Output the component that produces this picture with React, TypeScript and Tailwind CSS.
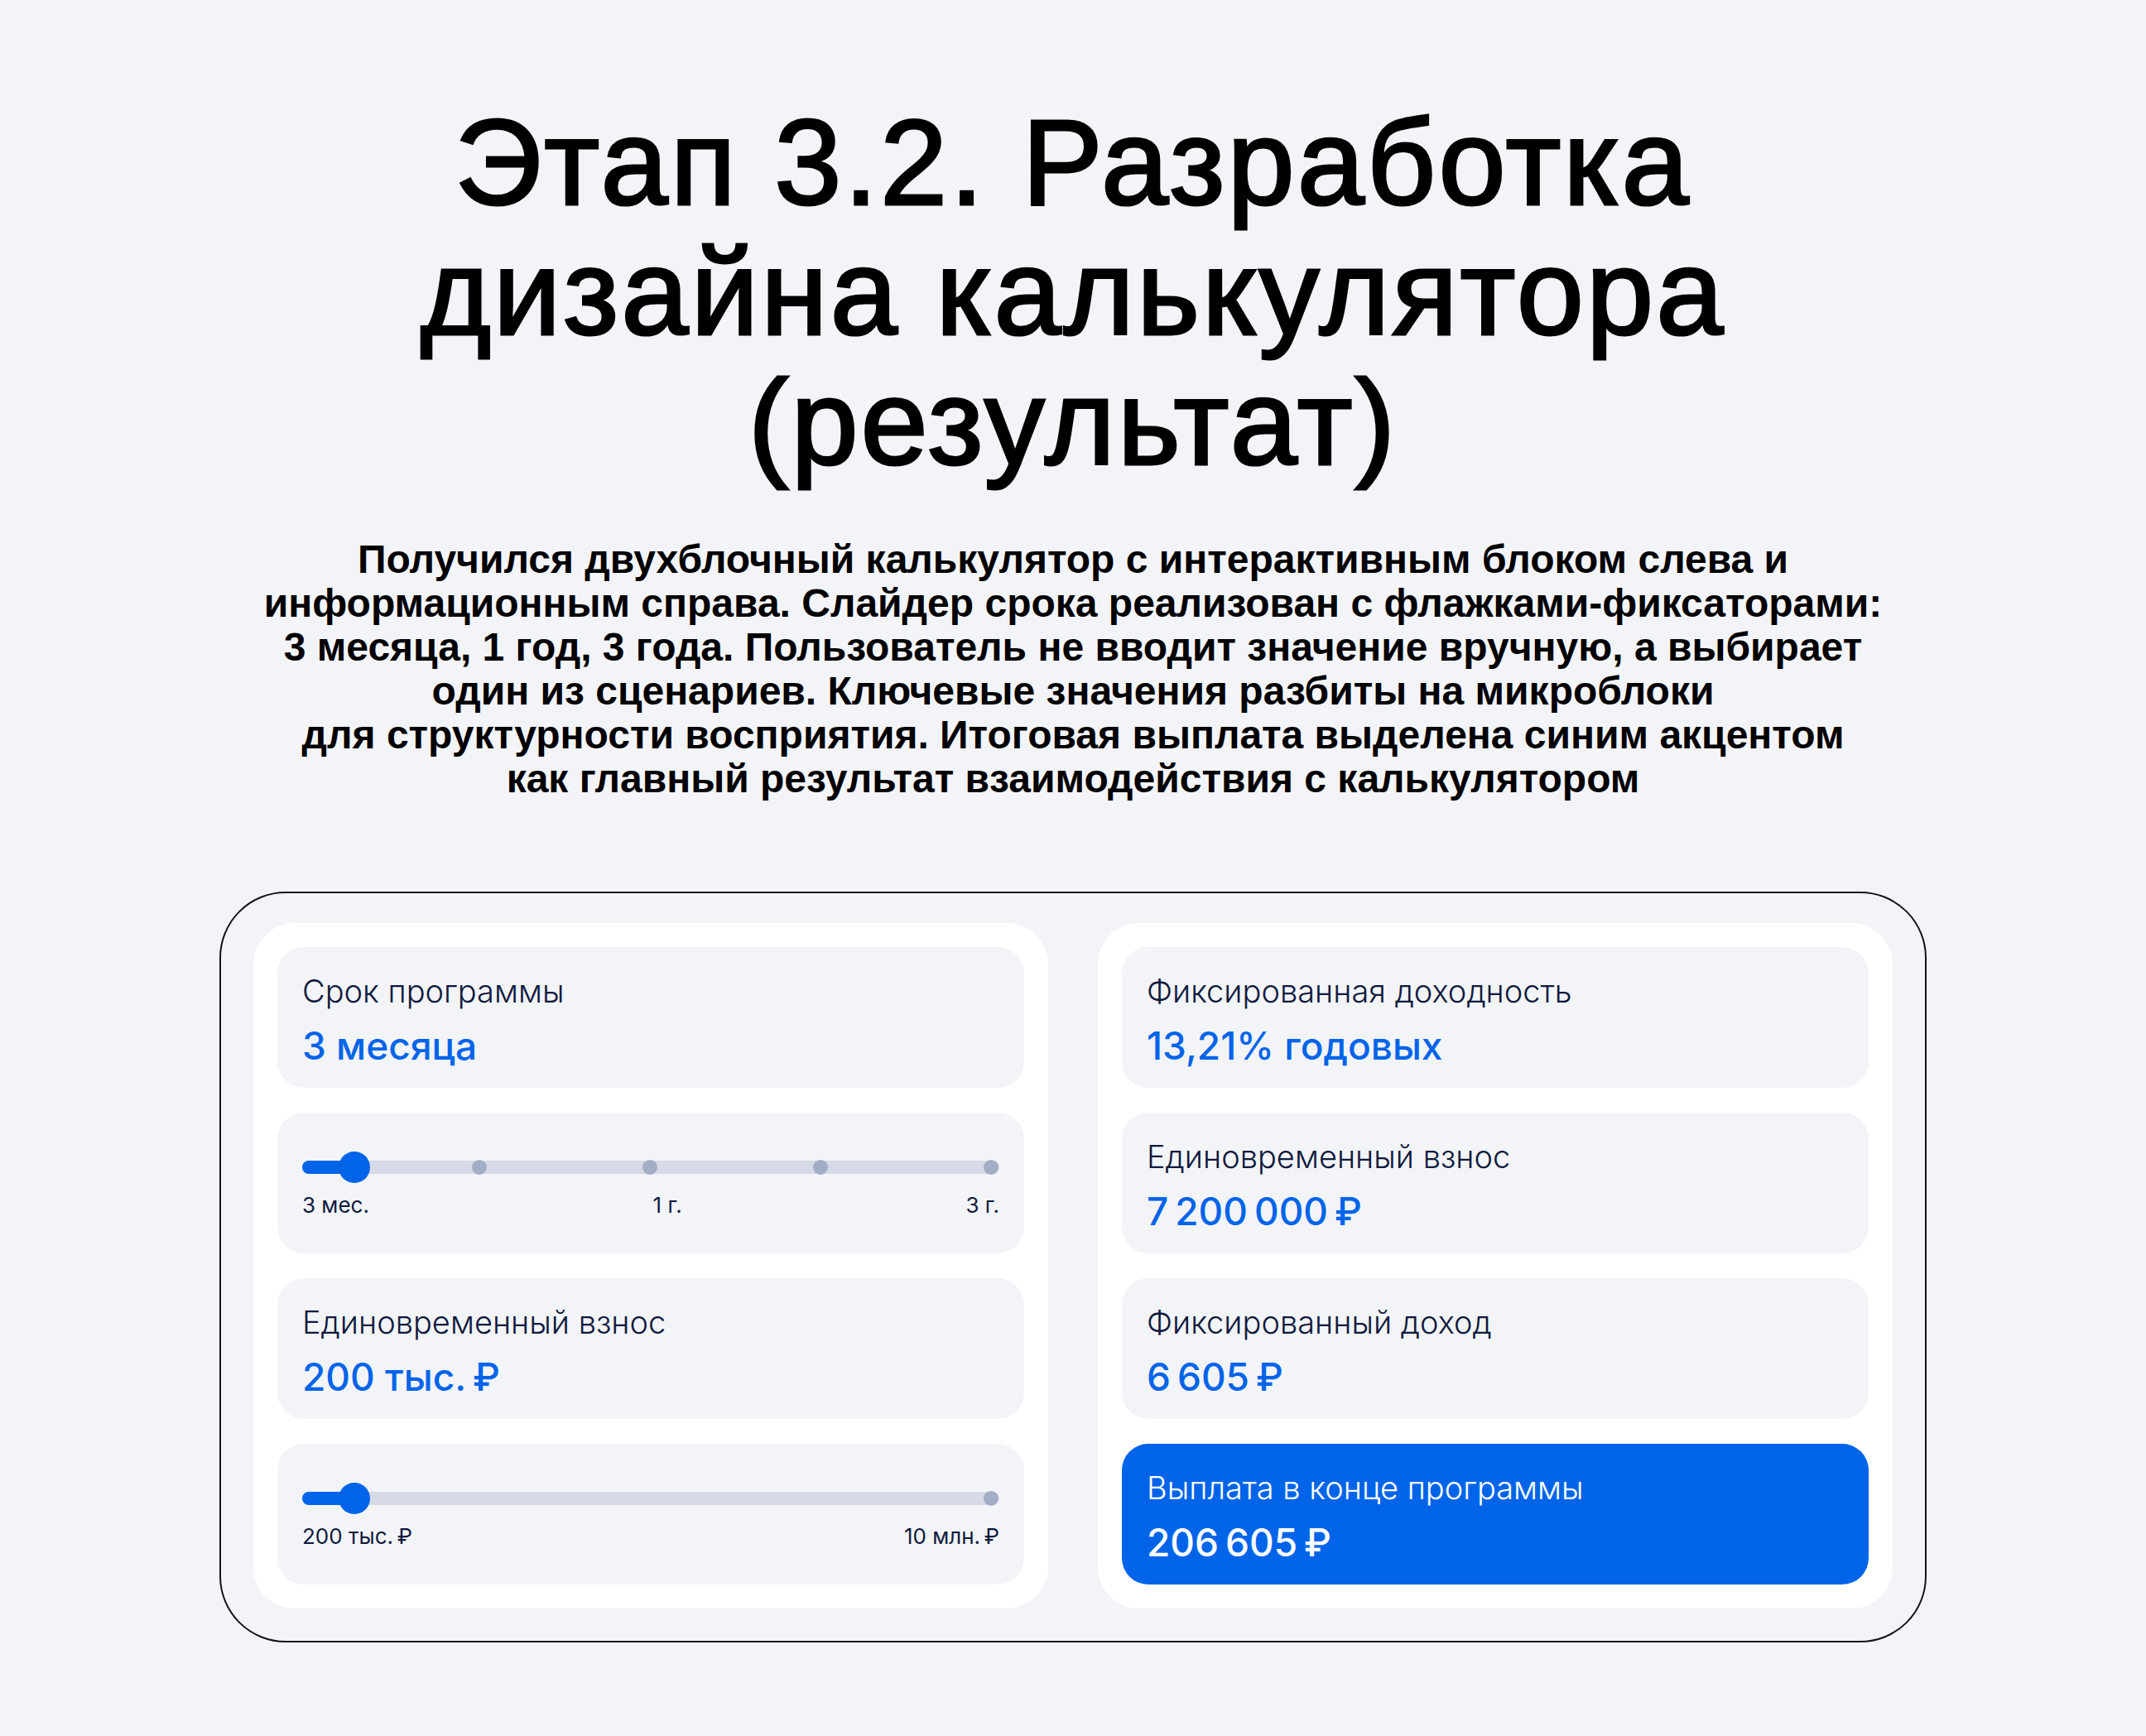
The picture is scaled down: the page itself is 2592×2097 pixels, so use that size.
const navy = "text-[#101a3d]";

// numbers use thin spaces between digit groups and before the ruble sign
const ts = "\u2009";

function InfoCard({ label, value, accent }: { label: string; value: string; accent?: boolean }) {
  return (
    <div
      className={`h-[170px] rounded-[32px] px-[30px] pt-[30px] ${accent ? "bg-[#0064e8]" : "bg-[#f3f4f8]"}`}
    >
      <div className={`text-[38px] leading-[46px] font-light ${accent ? "text-white" : navy}`}>{label}</div>
      <div
        className={`mt-[15px] text-[46px] leading-[56px] font-medium ${accent ? "text-white" : "text-[#0064e8]"}`}
      >
        {value}
      </div>
    </div>
  );
}

function SliderCard({ stops, labels }: { stops: number[]; labels: string[] }) {
  return (
    <div className="h-[170px] rounded-[32px] bg-[#f3f4f8] px-[30px] pt-[47px]">
      <div className="relative h-[38px]">
        {/* track */}
        <div className="absolute left-0 right-0 top-[11px] h-[16px] rounded-full bg-[#d5dae6]" />
        <div className="absolute left-0 top-[11px] h-[16px] w-[63px] rounded-full bg-[#0064e8]" />
        {stops.map((x) => (
          <div
            key={x}
            className="absolute top-[10px] h-[18px] w-[18px] -translate-x-1/2 rounded-full bg-[#a3adc6]"
            style={{ left: x }}
          />
        ))}
        {/* thumb */}
        <div className="absolute left-[44px] top-0 h-[38px] w-[38px] rounded-full bg-[#0064e8]" />
      </div>
      <div className={`mt-[11px] flex justify-between text-[26px] leading-[32px] ${navy}`}>
        {labels.map((l) => (
          <span key={l}>{l}</span>
        ))}
      </div>
    </div>
  );
}

export default function App() {
  return (
    <div className="min-h-screen bg-[#f3f4f8] pt-[118px] pb-[113px] font-['Inter',sans-serif]">
      <h1 className="text-center font-['Liberation_Sans',Arial,sans-serif] text-[146px] leading-[157px] tracking-[3px] text-black [-webkit-text-stroke:3px_black]">
        Этап 3.2. Разработка
        <br />
        дизайна калькулятора
        <br />
        (результат)
      </h1>

      <p className="mt-[60px] text-center font-['Liberation_Sans',Arial,sans-serif] text-[48px] leading-[53px] font-bold text-black">
        Получился двухблочный калькулятор с интерактивным блоком слева и
        <br />
        информационным справа. Слайдер срока реализован с флажками-фиксаторами:
        <br />
        3 месяца, 1 год, 3 года. Пользователь не вводит значение вручную, а выбирает
        <br />
        один из сценариев. Ключевые значения разбиты на микроблоки
        <br />
        для структурности восприятия. Итоговая выплата выделена синим акцентом
        <br />
        как главный результат взаимодействия с калькулятором
      </p>

      {/* calculator frame */}
      <div className="mx-auto mt-[110px] flex w-[2062px] gap-[60px] rounded-[80px] border-2 border-[#141414] px-[39px] pt-[36px] pb-[39px]">
        <div className="flex flex-1 flex-col gap-[30px] rounded-[50px] bg-white p-[29px]">
          <InfoCard label="Срок программы" value="3 месяца" />
          <SliderCard stops={[214, 420, 626, 832]} labels={["3 мес.", "1 г.", "3 г."]} />
          <InfoCard label="Единовременный взнос" value={`200 тыс.${ts}₽`} />
          <SliderCard stops={[832]} labels={[`200 тыс.${ts}₽`, `10 млн.${ts}₽`]} />
        </div>
        <div className="flex flex-1 flex-col gap-[30px] rounded-[50px] bg-white p-[29px]">
          <InfoCard label="Фиксированная доходность" value="13,21% годовых" />
          <InfoCard label="Единовременный взнос" value={`7${ts}200${ts}000${ts}₽`} />
          <InfoCard label="Фиксированный доход" value={`6${ts}605${ts}₽`} />
          <InfoCard label="Выплата в конце программы" value={`206${ts}605${ts}₽`} accent />
        </div>
      </div>
    </div>
  );
}
